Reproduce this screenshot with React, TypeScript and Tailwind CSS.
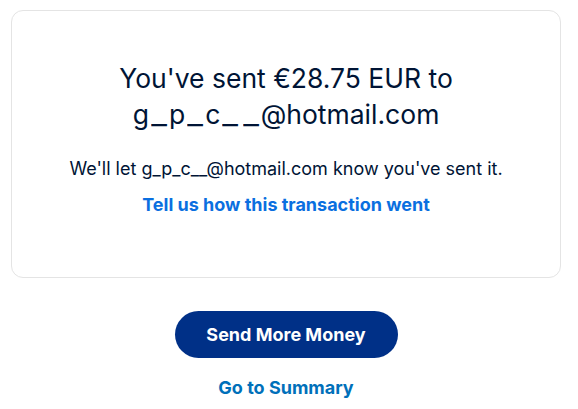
export default function App() {
  const email = "g_p_c__@hotmail.com";

  const wideEmail = email.split("").map((ch, i) =>
    ch === "_" ? (
      <span key={i} className="inline-block scale-x-[1.3] px-[4px]">
        _
      </span>
    ) : (
      ch
    )
  );

  return (
    <div className="min-h-[409px] w-[578px] bg-white pt-[10px] font-['Inter','Liberation_Sans',sans-serif] text-[#001435]">
      <div className="ml-[11px] w-[550px]">
        {/* confirmation card */}
        <div className="flex h-[268px] flex-col items-center rounded-[12px] border border-[#e4e4e4] px-6 pt-[49px] text-center">
          <h1 className="text-[26.5px] leading-[36px] font-normal">
            You've sent €28.75 EUR to
            <br />
            {wideEmail}
          </h1>
          <p className="mt-[25px] text-[18px] leading-[24px]">
            We'll let {email} know you've sent it.
          </p>
          <a href="#" className="mt-[12px] text-[18px] leading-[24px] font-bold text-[#0a6fe0]">
            Tell us how this transaction went
          </a>
        </div>

        {/* actions */}
        <div className="flex flex-col items-center">
          <button className="mt-[33px] h-[47px] w-[223px] rounded-full bg-[#003087] text-[18px] font-bold text-white">
            Send More Money
          </button>
          <a href="#" className="mt-[18px] text-[18px] leading-[24px] font-bold text-[#0070ba]">
            Go to Summary
          </a>
        </div>
      </div>
    </div>
  );
}
